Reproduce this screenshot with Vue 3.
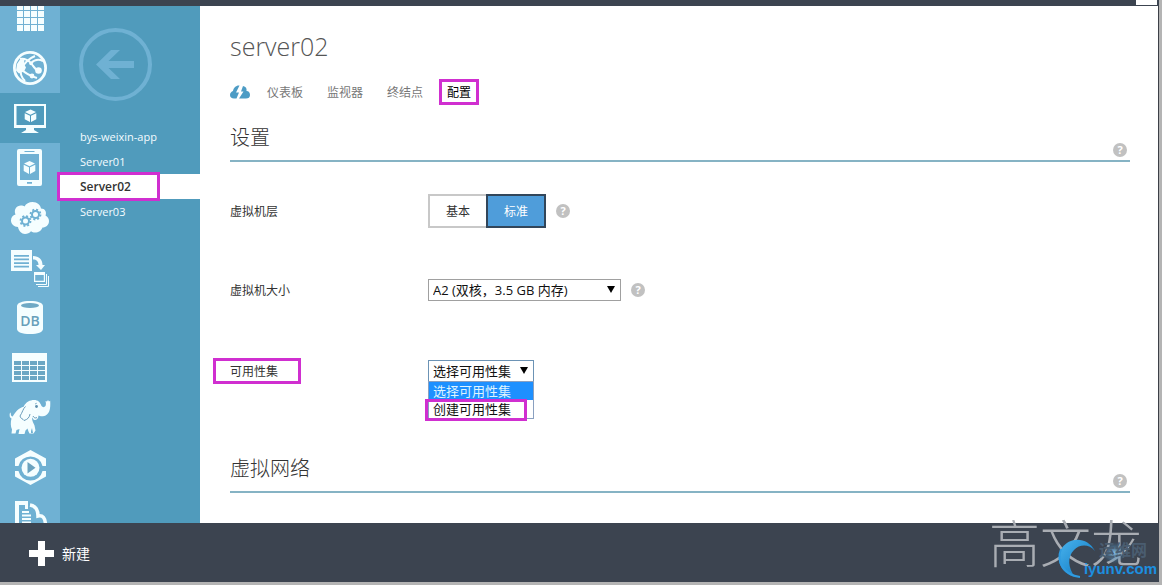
<script setup>
import { ref } from 'vue'

const servers = ['bys-weixin-app', 'Server01', 'Server02', 'Server03']
const tabs = ['仪表板', '监视器', '终结点', '配置']
const current = ref('Server02')
const tier = ref('标准')
const size = ref('A2')
const availability = ref('选择可用性集')
</script>

<template>
  <div class="page">
    <header class="topbar"><span class="corner"></span></header>

    <div class="body">
      <nav class="rail" aria-label="服务">
        <a href="#" class="tile first" aria-label="所有项目">
          <svg viewBox="0 0 60 37">
            <path fill="currentColor" d="M17 0h6v4h-6zM24 0h6v4h-6zM31 0h6v4h-6zM38 0h6v4h-6zM17 5h6v6h-6zM24 5h6v6h-6zM31 5h6v6h-6zM38 5h6v6h-6zM17 12h6v6h-6zM24 12h6v6h-6zM31 12h6v6h-6zM38 12h6v6h-6zM17 19h6v6h-6zM24 19h6v6h-6zM31 19h6v6h-6zM38 19h6v6h-6z" />
          </svg>
        </a>
        <a href="#" class="tile" aria-label="网站">
          <svg viewBox="0 0 60 50" fill="none" stroke="currentColor">
            <circle cx="30" cy="25" r="15.600" stroke-width="2.800" />
            <path stroke-width="2" d="M20 16C25 15 28 17 31 20M31 20C34 24 35 27 39 28M35 13C30 15 25 19 21 26M21 26C20 30 22 35 25 38M21 26C26 31 30 33 37 35M31 20C35 16 39 16 43 18" />
            <path fill="currentColor" stroke="none" d="M17 21l3-4.500 4.500-.5-.5 5 2 3.500-2 4-5 2-3-3z" />
            <circle cx="31" cy="20.500" r="1.800" fill="currentColor" stroke="none" />
            <circle cx="38.500" cy="27.500" r="3.300" fill="currentColor" stroke="none" />
            <circle cx="32" cy="33" r="2.400" fill="currentColor" stroke="none" />
          </svg>
        </a>
        <a href="#" class="tile active" aria-label="虚拟机">
          <svg viewBox="0 0 60 50">
            <path fill="currentColor" fill-rule="evenodd" d="M14 11h32v24H14zM16.500 13v19h27.500V13z" />
            <path fill="currentColor" d="M26 34h8v3l5 3H21l5-3z" />
            <path fill="currentColor" d="M30.500 16.500l5.500 2.500-5.500 2.700L25 19zM24.700 20.200l5.300 2.500v6.300l-5.300-2.700zM36.300 20.200L31 22.700V29l5.300-2.700z" />
          </svg>
        </a>
        <a href="#" class="tile" aria-label="移动服务">
          <svg viewBox="0 0 60 50">
            <path fill="currentColor" fill-rule="evenodd" d="M19 6h21a2 2 0 0 1 2 2v33a2 2 0 0 1-2 2H19a2 2 0 0 1-2-2V8a2 2 0 0 1 2-2zM20 11v26h19V11zM24.500 8v1h10V8zM27 39v1.800h5V39z" />
            <path fill="currentColor" d="M29.500 18l5.500 2.500-5.500 2.700-5.500-2.700zM23.700 21.700l5.300 2.500V31l-5.300-2.900zM35.300 21.700L30 24.200V31l5.300-2.900z" />
          </svg>
        </a>
        <a href="#" class="tile" aria-label="云服务">
          <svg viewBox="0 0 60 50">
            <path fill="currentColor" d="M18 34c-4 0-7-3-7-6.500 0-3 2-5.500 4.500-6-2-5 1-9 5.500-9 1.500 0 2.500.4 3.500 1C26 10.500 29 9 32.500 9c5 0 8 3 8.500 6.500 4 0 6 3.500 4.500 7 2 1 3.500 3 3.500 5.500 0 4-3 6.500-6.500 6.500-1 3-4 5-7.500 5-1.500 0-3-.5-4-1.300C29.500 40 27.500 41 25 41c-3.500 0-6.200-3-7-7z" />
            <g fill="none" stroke="#6fb1d3">
              <circle cx="25.500" cy="28" r="3.500" stroke-width="2" />
              <circle cx="25.500" cy="28" r="5" stroke-width="1.800" stroke-dasharray="2 1.927" />
              <circle cx="35.500" cy="21.500" r="3.500" stroke-width="2" />
              <circle cx="35.500" cy="21.500" r="5" stroke-width="1.800" stroke-dasharray="2 1.927" />
            </g>
          </svg>
        </a>
        <a href="#" class="tile" aria-label="计划程序">
          <svg viewBox="0 0 60 50">
            <path fill="currentColor" fill-rule="evenodd" d="M11 7h21v21H11zM14 12v1.700h15V12zM14 15.600v1.700h15v-1.700zM14 19.200v1.700h15v-1.700zM14 22.800v1.700h15v-1.700z" />
            <path fill="currentColor" d="M33 13c6 0 9.500 3.500 9.500 9H45l-4 5-5-5h2.500c0-3.500-2-5.500-5.500-5.500z" />
            <path fill="currentColor" fill-rule="evenodd" d="M34 29h11v10H34zM35.200 32v5.800h8.600V32z" />
            <path fill="none" stroke="currentColor" d="M36 41.500h10.500V31M38 43.500h10.500V33" />
          </svg>
        </a>
        <a href="#" class="tile" aria-label="SQL 数据库">
          <svg viewBox="0 0 60 50">
            <path fill="currentColor" d="M17 13c0-3 5-5 13-5s13 2 13 5v23c0 3-5 5-13 5s-13-2-13-5z" />
            <ellipse cx="30" cy="12.500" rx="9" ry="2.500" fill="#6fa9c5" />
            <text x="30" y="33" class="db" text-anchor="middle">DB</text>
          </svg>
        </a>
        <a href="#" class="tile" aria-label="存储">
          <svg viewBox="0 0 60 50">
            <path fill="currentColor" d="M12 10h35v29H12z" />
            <path fill="#6ba7c4" d="M14 18h7v4h-7zM22 18h7v4h-7zM30 18h7v4h-7zM38 18h7v4h-7zM14 23h7v4h-7zM22 23h7v4h-7zM30 23h7v4h-7zM38 23h7v4h-7zM14 28h7v4h-7zM22 28h7v4h-7zM30 28h7v4h-7zM38 28h7v4h-7zM14 33h7v4h-7zM22 33h7v4h-7zM30 33h7v4h-7zM38 33h7v4h-7z" />
          </svg>
        </a>
        <a href="#" class="tile" aria-label="HDInsight">
          <svg viewBox="0 0 60 50">
            <path fill="currentColor" d="M24 13c2-4 6-6 10-6 4 0 6 2 7.500 6 1 1.500 3 1.500 4 0 .7-1.500.5-3 0-5l1.500.5 1-1.500 1 1.500 1.200-.8c.5 8-.5 14.500-7.200 15.500-2 .3-3.500-.3-4.500-.8 0 3-2 4.600-3.500 4.600-2 0-2-2-3-2.500 0 4 1.500 5.500 2.500 8l1 5-2 3h-4l-1-2-1-3-2 2-1 3.500h-6l1-5-3 1-1 3.500h-4l.5-4c-1.500-3-1.500-7.500-.5-11-1.500-.5-2.500-2.500-1.500-6l.7.500c0 2.500.8 3.500 2 3.500 2.500-4 5.500-8.500 11.300-10z" />
            <path fill="none" stroke="#6a9dbb" stroke-width="1" d="M25.500 13.500c-2.500 2-3 6-5.500 9.500.5 3 3 2.500 4 4.500 3.500-1 5.500-3 6-6.500M33 23c1 2 2.500 2.500 4 1.500" />
            <path fill="none" stroke="#6a9dbb" stroke-width=".8" d="M35 11l1.800-.8" />
            <circle cx="36.500" cy="13.500" r="1.400" fill="#5d8eac" />
            <path fill="#6fb1d3" d="M31 38l1-3 1 5h-2z" />
          </svg>
        </a>
        <a href="#" class="tile" aria-label="媒体服务">
          <svg viewBox="0 0 60 50">
            <path fill="currentColor" d="M15 23v-7.500L30.500 7 46 15.500V23h-3.500A12.300 12.300 0 0 0 18.500 23zM15 28v5.500L30.500 42 46 33.500V28h-3.500a12.300 12.300 0 0 1-24 0z" />
            <circle cx="30.500" cy="24.800" r="9" fill="currentColor" />
            <path fill="#6ba3bf" d="M27.500 19l8 5.800-8 5.800z" />
          </svg>
        </a>
        <a href="#" class="tile" aria-label="服务总线">
          <svg viewBox="0 0 60 50">
            <path fill="currentColor" fill-rule="evenodd" d="M15 8h13v8h-3v-4h-6v21h-4z" />
            <path fill="currentColor" d="M22 18h7v2h-7zM22 21.500h9v2h-9zM22 25h9v2h-9zM22 28.500h9v2h-9z" />
            <path fill="none" stroke="currentColor" stroke-width="3.500" d="M30 12c6 1 8 6 8 11 5-1 7 2 7.500 8" />
          </svg>
        </a>
      </nav>

      <aside class="servers">
        <button class="back" type="button" aria-label="返回">
          <svg viewBox="0 0 74 74">
            <circle cx="36.500" cy="36.500" r="34.500" fill="none" stroke="currentColor" stroke-width="4" />
            <path fill="currentColor" d="M17 36.500L32 22h9L29.500 33H55v7H29.500L41 51h-9z" />
          </svg>
        </button>
        <ul>
          <li v-for="name in servers" :key="name">
            <a href="#" :class="{ selected: name === current }" @click.prevent="current = name">{{ name }}</a>
          </li>
        </ul>
      </aside>

      <main>
        <h1>server02</h1>
        <div class="tabs">
          <svg class="quick" viewBox="0 0 20 15" aria-hidden="true">
            <path fill="#4d9cc5" d="M4 13.500C1.500 13.500 0 12 0 10c0-2 1.500-3.500 3-4C3.500 2.500 6.500 0 9.500.5L6 7.500h3l-2.500 6zM9 13.500l4.500-7H11L13 1c3 .5 4 2.500 3.500 5C19 6 20 8 20 10c0 2.500-1.500 3.500-4 3.500z" />
          </svg>
          <a v-for="tab in tabs" :key="tab" href="#" :class="{ marked: tab === '配置' }">{{ tab }}</a>
        </div>

        <div class="section">
          <h2>设置</h2><button class="help" type="button" aria-label="帮助">?</button>
        </div>

        <div class="row tier">
          <span class="label">虚拟机层</span>
          <div class="segments">
            <button type="button" :class="{ on: tier === '基本' }" @click="tier = '基本'">基本</button>
            <button type="button" :class="{ on: tier === '标准' }" @click="tier = '标准'">标准</button>
          </div>
          <button class="help" type="button" aria-label="帮助">?</button>
        </div>

        <div class="row size">
          <label class="label" for="size">虚拟机大小</label>
          <div class="picker wide">
            <select id="size" v-model="size"><option value="A2">A2 (双核，3.5 GB 内存)</option></select>
          </div>
          <button class="help" type="button" aria-label="帮助">?</button>
        </div>

        <div class="row avail">
          <label class="label marked" for="avail">可用性集</label>
          <div class="picker open">
            <select id="avail" v-model="availability">
              <option>选择可用性集</option>
              <option>创建可用性集</option>
            </select>
            <ul class="menu" role="listbox" aria-label="可用性集">
              <li role="option" aria-selected="true" class="hover">选择可用性集</li>
              <li role="option" aria-selected="false" class="marked">创建可用性集</li>
            </ul>
          </div>
        </div>

        <div class="section network">
          <h2>虚拟网络</h2><button class="help" type="button" aria-label="帮助">?</button>
        </div>
      </main>
    </div>

    <footer>
      <button class="new" type="button">
        <svg viewBox="0 0 25 25" aria-hidden="true"><path fill="#fff" d="M9 0h7v9h9v7h-9v9H9v-9H0V9h9z" /></svg>
        <span>新建</span>
      </button>
      <div class="signature">
        高文龙
        <div class="brand">
          <svg viewBox="0 0 42 42" aria-hidden="true">
            <defs>
              <linearGradient id="swoosh" x1="0" y1="0" x2="1" y2="1">
                <stop offset="0" stop-color="#4ab4ee" /><stop offset="1" stop-color="#0872bd" />
              </linearGradient>
              <radialGradient id="glow">
                <stop offset="0" stop-color="#8fc4e8" /><stop offset="1" stop-color="#2f6f9f" stop-opacity="0" />
              </radialGradient>
            </defs>
            <path fill="url(#swoosh)" d="M37 14C30 0 12-1 4 11c-7 11-2 25 13 29C10 31 9 20 16 13c6-6 15-6 21 1z" />
            <path fill="none" stroke="#2f9be0" stroke-width="2" d="M3 12c-5 13 3 26 19 28" />
            <circle cx="56" cy="16" r="11" fill="url(#glow)" />
          </svg>
          <span class="cn">运维网</span>
          <span class="site">iyunv.com</span>
        </div>
      </div>
    </footer>
  </div>
</template>

<style>
html,
body {
  background: #fff;
  overflow: hidden;
}
</style>

<style scoped>
*,
*::before,
*::after {
  box-sizing: border-box;
}
.page {
  display: flex;
  flex-direction: column;
  height: 100vh;
  border-right: 3px solid #b4b4b4;
  border-bottom: 3px solid #b4b4b4;
  font: 12px/20px "Open Sans", "Noto Sans CJK SC", sans-serif;
  color: #333;
  background: #fff;
}
h1,
h2,
ul {
  margin: 0;
  padding: 0;
  list-style: none;
}
h1,
h2 {
  font-weight: 300;
}
a {
  text-decoration: none;
  color: inherit;
}
button {
  font: inherit;
  margin: 0;
  padding: 0;
  border: 0;
  background: none;
}
.topbar {
  flex: none;
  display: flex;
  justify-content: flex-end;
  height: 6px;
  padding-right: 2px;
  background: #3c4450;
}
.corner {
  width: 21px;
  height: 5px;
  background: #fff;
}
.body {
  flex: 1;
  min-height: 0;
  display: flex;
  overflow: hidden;
  border-right: 1px solid #3c4047;
}
.rail {
  flex: none;
  width: 60px;
  background: #6fb1d3;
  color: #f5feff;
}
.tile {
  display: block;
  height: 50px;
}
.tile.first {
  height: 37px;
}
.tile svg {
  display: block;
  width: 100%;
  height: 100%;
}
.active {
  background: #509bbc;
}
.db {
  font: 600 14px "Open Sans", sans-serif;
  fill: #679fba;
}
.servers {
  flex: none;
  width: 140px;
  background: #509bbc;
  color: #f4fcff;
}
.back {
  display: block;
  width: 74px;
  height: 74px;
  margin: 22px 0 22px 19px;
  color: #6fb1d3;
}
.back svg {
  display: block;
}
.servers a {
  display: block;
  position: relative;
  height: 25px;
  padding-left: 20px;
  font-size: 11px;
  line-height: 25px;
}
.servers .selected {
  background: #fff;
  color: #333;
  font-size: 12px;
  font-weight: 600;
}
.selected::after,
.marked::after {
  content: "";
  position: absolute;
  border: 3px solid #d02fd0;
  pointer-events: none;
}
.selected::after {
  inset: -2px 40px -2px -3px;
}
main {
  flex: 1;
  min-width: 0;
  padding: 22px 28px 0 30px;
}
h1 {
  font-size: 25px;
  line-height: 36px;
  color: #555;
}
.tabs {
  display: flex;
  align-items: center;
  gap: 24px;
  height: 20px;
  margin-top: 18px;
  color: #777;
}
.tabs a {
  padding-top: 2px;
}
.quick {
  width: 20px;
  height: 15px;
  margin-right: -7px;
}
.marked {
  position: relative;
}
.tabs .marked {
  color: #000;
}
.tabs .marked::after {
  inset: -2px -8px;
}
.section {
  display: flex;
  justify-content: space-between;
  align-items: flex-end;
  height: 60px;
  padding-bottom: 3px;
  border-bottom: 2px solid #86b3c4;
}
h2 {
  font-size: 20px;
  line-height: 30px;
  padding-bottom: 4px;
  color: #333;
}
.help {
  flex: none;
  width: 14px;
  height: 14px;
  border-radius: 50%;
  background: #c1c1c1;
  color: #fff;
  font-size: 11px;
  font-weight: 700;
  line-height: 14px;
  text-align: center;
}
.section .help {
  margin: 0 3px 0 0;
}
.row {
  display: flex;
  align-items: center;
}
.label {
  flex: none;
  width: 198px;
  padding-top: 2px;
}
.row .help {
  margin-left: 10px;
}
.tier {
  height: 34px;
  margin-top: 32px;
}
.segments {
  display: flex;
}
.segments button {
  width: 60px;
  height: 34px;
  padding-top: 2px;
  border: 2px solid #c8c8c8;
  color: #333;
}
.segments button + button {
  margin-left: -2px;
}
.segments .on {
  position: relative;
  border-color: #32465a;
  background: #4f9dda;
  color: #fff;
}
.size {
  height: 22px;
  margin-top: 51px;
}
.picker {
  position: relative;
  width: 106px;
}
.picker.wide {
  width: 193px;
}
.picker::before {
  content: "";
  position: absolute;
  top: 7px;
  right: 6px;
  border: 4px solid transparent;
  border-top: 7px solid #000;
  border-bottom: 0;
}
select {
  appearance: none;
  display: block;
  width: 100%;
  height: 22px;
  padding: 0 4px;
  border: 1px solid #a0a0a0;
  border-radius: 0;
  background: transparent;
  color: #111;
  font: 13px/20px "Open Sans", "Noto Sans CJK SC", sans-serif;
}
.avail {
  height: 22px;
  margin-top: 59px;
}
.open select {
  border-color: #6c93b5;
}
.avail .label::after {
  inset: -2px auto -2px -17px;
  width: 88px;
}
.menu {
  position: absolute;
  top: 21px;
  left: 0;
  right: 0;
  border: 1px solid #8aa0c0;
  background: #fff;
  color: #111;
  font-size: 13px;
}
.menu li {
  height: 18px;
  padding-left: 4px;
  line-height: 18px;
}
.menu .hover {
  background: #1e90ff;
  color: #dff4ff;
}
.menu .marked::after {
  inset: -1px auto -3px -4px;
  width: 102px;
}
.network {
  margin-top: 51px;
}
footer {
  flex: none;
  display: flex;
  justify-content: space-between;
  height: 59px;
  padding: 2px 17px 0 29px;
  background: #3c4450;
}
.new {
  display: flex;
  align-items: center;
  gap: 8px;
  color: #fff;
  font-size: 14px;
}
.new svg {
  width: 25px;
  height: 25px;
}
.signature {
  position: relative;
  margin-top: -12px;
  height: 60px;
  font-size: 51px;
  line-height: 60px;
  font-weight: 300;
  color: #a9adb3;
}
.brand {
  position: absolute;
  right: -15px;
  bottom: -6px;
  width: 99px;
  height: 42px;
}
.brand svg {
  display: block;
  width: 42px;
  height: 42px;
  overflow: visible;
}
.cn,
.site {
  position: absolute;
  white-space: nowrap;
}
.cn {
  left: 41px;
  top: 3px;
  font-size: 16px;
  line-height: 20px;
  font-weight: 700;
  color: #4a5d70;
}
.site {
  right: 0;
  bottom: 0;
  font: 700 15px/20px "Liberation Sans", Arial, sans-serif;
  color: #1c8fe0;
}
</style>
